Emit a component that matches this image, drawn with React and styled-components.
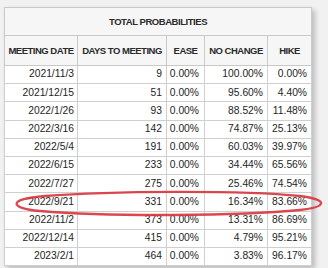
import React from "react";
import styled, { createGlobalStyle } from "styled-components";

const Global = createGlobalStyle`
  html, body { margin: 0; padding: 0; background: #f1f1f1; }
  body { width: 328px; height: 268px; overflow: hidden; }
`;

const Page = styled.div`
  position: relative;
  width: 328px;
  height: 268px;
  padding: 7px 0 0 4px;
  box-sizing: border-box;
  font-family: "Liberation Sans", Arial, sans-serif;
`;

const Table = styled.table`
  border-collapse: collapse;
  table-layout: fixed;
  width: 308px;
  background: #fff;
  border: 1px solid #b9b9b9;
  box-shadow: 3px 3px 5px rgba(0, 0, 0, 0.22);
`;

const TitleCell = styled.th`
  height: 27px;
  padding: 0;
  background: #f6f6f6;
  border: 1px solid #c9c9c9;
  color: #2a2a2a;
  font-size: 9.5px;
  font-weight: bold;
  letter-spacing: -0.45px;
  text-align: center;
  vertical-align: middle;
`;

const HeadCell = styled.th`
  height: 29px;
  padding: 0;
  background: #f6f6f6;
  border: 1px solid #c9c9c9;
  color: #2a2a2a;
  font-size: 9.5px;
  font-weight: bold;
  letter-spacing: -0.5px;
  text-align: center;
  white-space: nowrap;
  vertical-align: middle;
`;

const Cell = styled.td`
  height: 17.2px;
  padding: 0 ${(p) => p.$pad || 4}px 0 0;
  border: 1px solid #cfcfcf;
  color: #1e1e1e;
  font-size: 10.3px;
  text-align: right;
  white-space: nowrap;
  vertical-align: middle;
  line-height: 1;
`;

const Circle = styled.svg`
  position: absolute;
  left: 0;
  top: 0;
  pointer-events: none;
`;

const rows = [
  ["2021/11/3", "9", "0.00%", "100.00%", "0.00%"],
  ["2021/12/15", "51", "0.00%", "95.60%", "4.40%"],
  ["2022/1/26", "93", "0.00%", "88.52%", "11.48%"],
  ["2022/3/16", "142", "0.00%", "74.87%", "25.13%"],
  ["2022/5/4", "191", "0.00%", "60.03%", "39.97%"],
  ["2022/6/15", "233", "0.00%", "34.44%", "65.56%"],
  ["2022/7/27", "275", "0.00%", "25.46%", "74.54%"],
  ["2022/9/21", "331", "0.00%", "16.34%", "83.66%"],
  ["2022/11/2", "373", "0.00%", "13.31%", "86.69%"],
  ["2022/12/14", "415", "0.00%", "4.79%", "95.21%"],
  ["2023/2/1", "464", "0.00%", "3.83%", "96.17%"],
];

const widths = [73, 89, 38, 63, 44];
const pads = [3, 4, 5, 4, 4];

export default function App() {
  return (
    <Page>
      <Global />
      <Table>
        <colgroup>
          {widths.map((w, i) => (
            <col key={i} style={{ width: w }} />
          ))}
        </colgroup>
        <thead>
          <tr>
            <TitleCell colSpan={5}>TOTAL PROBABILITIES</TitleCell>
          </tr>
          <tr>
            <HeadCell>MEETING DATE</HeadCell>
            <HeadCell>DAYS TO MEETING</HeadCell>
            <HeadCell>EASE</HeadCell>
            <HeadCell>NO CHANGE</HeadCell>
            <HeadCell>HIKE</HeadCell>
          </tr>
        </thead>
        <tbody>
          {rows.map((r) => (
            <tr key={r[0]}>
              {r.map((v, i) => (
                <Cell key={i} $pad={pads[i]}>
                  {v}
                </Cell>
              ))}
            </tr>
          ))}
        </tbody>
      </Table>
      <Circle width="328" height="268" viewBox="0 0 328 268">
        <path
          d="M 40 211 C 8 208, 8 199, 45 196 C 110 191, 240 190, 300 196 C 330 200, 326 207, 300 210 C 240 216, 110 217, 40 211 Z"
          fill="none"
          stroke="#d8343d"
          strokeWidth="2.4"
          strokeOpacity="0.9"
        />
      </Circle>
    </Page>
  );
}
